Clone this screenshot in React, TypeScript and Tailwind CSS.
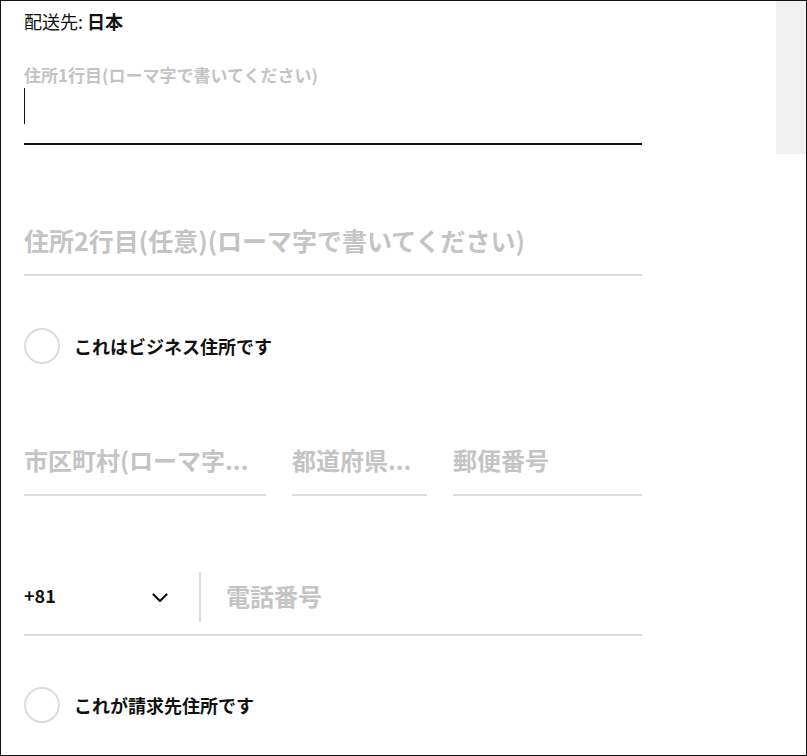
const FONT = "font-['Noto_Sans_CJK_JP',_'Noto_Sans',_sans-serif]";

function Radio({ label }: { label: string }) {
  return (
    <label className="flex items-center gap-[14px]">
      <span className="w-[36px] h-[36px] rounded-full border-2 border-[#dcdcdc] bg-white" />
      <span className="text-[18px] leading-[24px] font-semibold text-[#111]">
        {label}
      </span>
    </label>
  );
}

export default function App() {
  return (
    <div
      className={`${FONT} w-[807px] h-[756px] border border-[#111] bg-white flex overflow-hidden`}
    >
      <div className="flex-1 pl-[23px]">
        <div className="w-[618px]">
          {/* Destination */}
          <p className="mt-[10px] text-[18px] leading-[20px] text-[#111]">
            配送先: <span className="font-bold">日本</span>
          </p>

          {/* Address line 1 (focused) */}
          <div className="mt-[34px] border-b-2 border-[#111] h-[80px]">
            <p className="text-[17px] leading-[20px] font-bold text-[#c4c4c4]">
              住所1行目(ローマ字で書いてください)
            </p>
            <div className="mt-[3px] w-px h-[36px] bg-[#111]" />
          </div>

          {/* Address line 2 */}
          <div className="pt-[80px] pb-[19px] border-b-2 border-[#dcdcdc]">
            <p className="text-[25px] leading-[30px] font-bold text-[#c4c4c4]">
              住所2行目(任意)(ローマ字で書いてください)
            </p>
          </div>

          <div className="mt-[52px]">
            <Radio label="これはビジネス住所です" />
          </div>

          {/* City / prefecture / postcode */}
          <div className="mt-[81px] flex gap-[26px]">
            <div className="w-[242px] pb-[19px] border-b-2 border-[#dcdcdc]">
              <p className="text-[24px] leading-[30px] font-bold text-[#c4c4c4] whitespace-nowrap">
                市区町村(ローマ字...
              </p>
            </div>
            <div className="w-[135px] pb-[19px] border-b-2 border-[#dcdcdc]">
              <p className="text-[24px] leading-[30px] font-bold text-[#c4c4c4] whitespace-nowrap">
                都道府県...
              </p>
            </div>
            <div className="flex-1 pb-[19px] border-b-2 border-[#dcdcdc]">
              <p className="text-[24px] leading-[30px] font-bold text-[#c4c4c4]">
                郵便番号
              </p>
            </div>
          </div>

          {/* Phone */}
          <div className="mt-[76px] pb-[12px] border-b-2 border-[#dcdcdc]">
            <div className="flex items-stretch h-[50px]">
              <div className="w-[144px] flex items-center justify-between">
                <span className="text-[18px] leading-[24px] font-semibold text-[#111] -mt-[5px]">
                  +81
                </span>
                <svg
                  width="16"
                  height="10"
                  viewBox="0 0 16 10"
                  fill="none"
                  stroke="#111"
                  strokeWidth="2.2"
                  strokeLinecap="round"
                  strokeLinejoin="round"
                  className="mt-[1px]"
                >
                  <polyline points="1.5,1.5 8,8 14.5,1.5" />
                </svg>
              </div>
              <div className="ml-[31px] w-[2px] bg-[#dcdcdc]" />
              <div className="ml-[25px] flex items-center">
                <span className="text-[24px] leading-[30px] font-bold text-[#c4c4c4] -mt-[2px]">
                  電話番号
                </span>
              </div>
            </div>
          </div>

          <div className="mt-[51px]">
            <Radio label="これが請求先住所です" />
          </div>
        </div>
      </div>

      {/* Side panel */}
      <div className="w-[30px]">
        <div className="h-[153px] bg-[#f0f0f0]" />
      </div>
    </div>
  );
}
